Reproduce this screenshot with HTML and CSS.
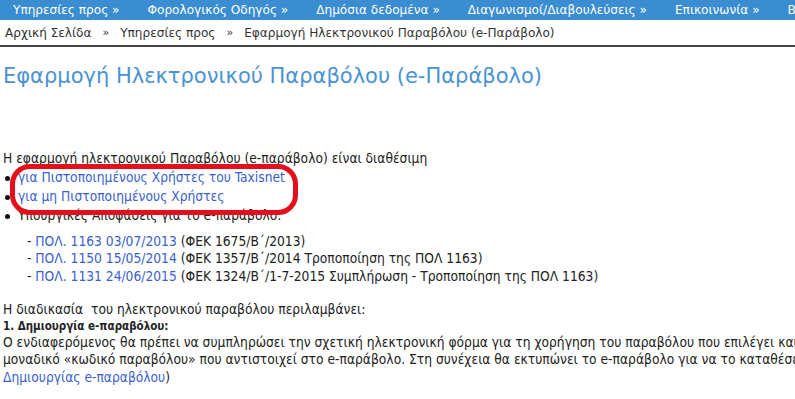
FILE: index.html
```html
<!DOCTYPE html>
<html lang="el">
<head>
    <meta charset="UTF-8">
    <title>e-Παράβολο</title>
    <link rel="stylesheet" href="styles.css">
</head>
<body>
    <nav class="topnav">
        <a href="#">Υπηρεσίες προς »</a>
        <a href="#">Φορολογικός Οδηγός »</a>
        <a href="#">Δημόσια δεδομένα »</a>
        <a href="#">Διαγωνισμοί/Διαβουλεύσεις »</a>
        <a href="#">Επικοινωνία »</a>
        <a href="#">Βοήθεια »</a>
    </nav>

    <div class="crumbs">
        <a href="#">Αρχική Σελίδα</a>
        <span class="sep">»</span>
        <a href="#">Υπηρεσίες προς</a>
        <span class="sep">»</span>
        <span>Εφαρμογή Ηλεκτρονικού Παραβόλου (e-Παράβολο)</span>
    </div>

    <h1 class="page-title">Εφαρμογή Ηλεκτρονικού Παραβόλου (e-Παράβολο)</h1>

    <div class="content">
        <p>Η εφαρμογή ηλεκτρονικού Παραβόλου (e-παράβολο) είναι διαθέσιμη</p>
        <div class="links-box">
            <ul class="bullets">
                <li><a href="#">για Πιστοποιημένους Χρήστες του Taxisnet</a></li>
                <li><a href="#">για μη Πιστοποιημένους Χρήστες</a></li>
                <li>Υπουργικές Αποφάσεις για το e-παράβολο:</li>
            </ul>
            <div class="highlight"></div>
        </div>

        <ul class="decisions">
            <li>- <a href="#">ΠΟΛ. 1163 03/07/2013</a> (ΦΕΚ 1675/Β΄/2013)</li>
            <li>- <a href="#">ΠΟΛ. 1150 15/05/2014</a> (ΦΕΚ 1357/Β΄/2014 Τροποποίηση της ΠΟΛ 1163)</li>
            <li>- <a href="#">ΠΟΛ. 1131 24/06/2015</a> (ΦΕΚ 1324/Β΄/1-7-2015 Συμπλήρωση - Τροποποίηση της ΠΟΛ 1163)</li>
        </ul>

        <p>Η διαδικασία&nbsp; του ηλεκτρονικού παραβόλου περιλαμβάνει:</p>
        <p class="step">1. Δημιουργία e-παραβόλου:</p>
        <p>Ο ενδιαφερόμενος θα πρέπει να συμπληρώσει την σχετική ηλεκτρονική φόρμα για τη χορήγηση του παραβόλου που επιλέγει και<br>
        μοναδικό «κωδικό παραβόλου» που αντιστοιχεί στο e-παράβολο. Στη συνέχεια θα εκτυπώνει το e-παράβολο για να το καταθέσει<br>
        <a href="#">Δημιουργίας e-παραβόλου</a>)</p>
    </div>
</body>
</html>
```

FILE: styles.css
```css
* {
    margin: 0;
    padding: 0;
    box-sizing: border-box;
}

body {
    background: #fff;
    color: #222;
    font-family: 'DejaVu Sans Condensed', 'DejaVu Sans', sans-serif;
    overflow: hidden;
    width: 795px;
}

a {
    text-decoration: none;
}

.topnav {
    display: flex;
    gap: 28px;
    height: 20px;
    align-items: center;
    padding-left: 13px;
    background-color: #3a8dd0;
    white-space: nowrap;
    overflow: hidden;
}

.topnav a {
    color: #fff;
    font-family: 'DejaVu Sans', sans-serif;
    font-size: 12.1px;
}

.crumbs {
    display: flex;
    gap: 11px;
    align-items: center;
    height: 27px;
    padding-left: 5px;
    border-bottom: 2px solid #444;
    font-family: 'DejaVu Sans', sans-serif;
    font-size: 12.1px;
    color: #333;
    white-space: nowrap;
}

.crumbs a {
    color: #333;
}

.crumbs .sep {
    font-size: 11px;
}

.page-title {
    margin: 15px 0 0 3px;
    color: #4a93d3;
    font-family: 'DejaVu Sans', sans-serif;
    font-size: 21px;
    font-weight: normal;
    line-height: 28px;
}

.content {
    margin: 60px 0 0 3px;
    font-size: 13.7px;
    line-height: 17.5px;
    white-space: nowrap;
}

.content a {
    color: #3a5fcd;
}

.links-box {
    position: relative;
}

.bullets {
    list-style: none;
    line-height: 19px;
}

.bullets li {
    position: relative;
    padding-left: 15px;
}

.bullets li::before {
    content: "";
    position: absolute;
    left: 2px;
    top: 8px;
    width: 5px;
    height: 5px;
    border-radius: 50%;
    background: #111;
}

.highlight {
    position: absolute;
    left: 7px;
    top: -4px;
    width: 288px;
    height: 51px;
    border: 5px solid #e3101c;
    border-radius: 20px;
}

.decisions {
    list-style: none;
    margin: 8px 0 16px 24px;
}

.step {
    font-weight: bold;
    font-size: 11.5px;
    line-height: 15px;
}
```
